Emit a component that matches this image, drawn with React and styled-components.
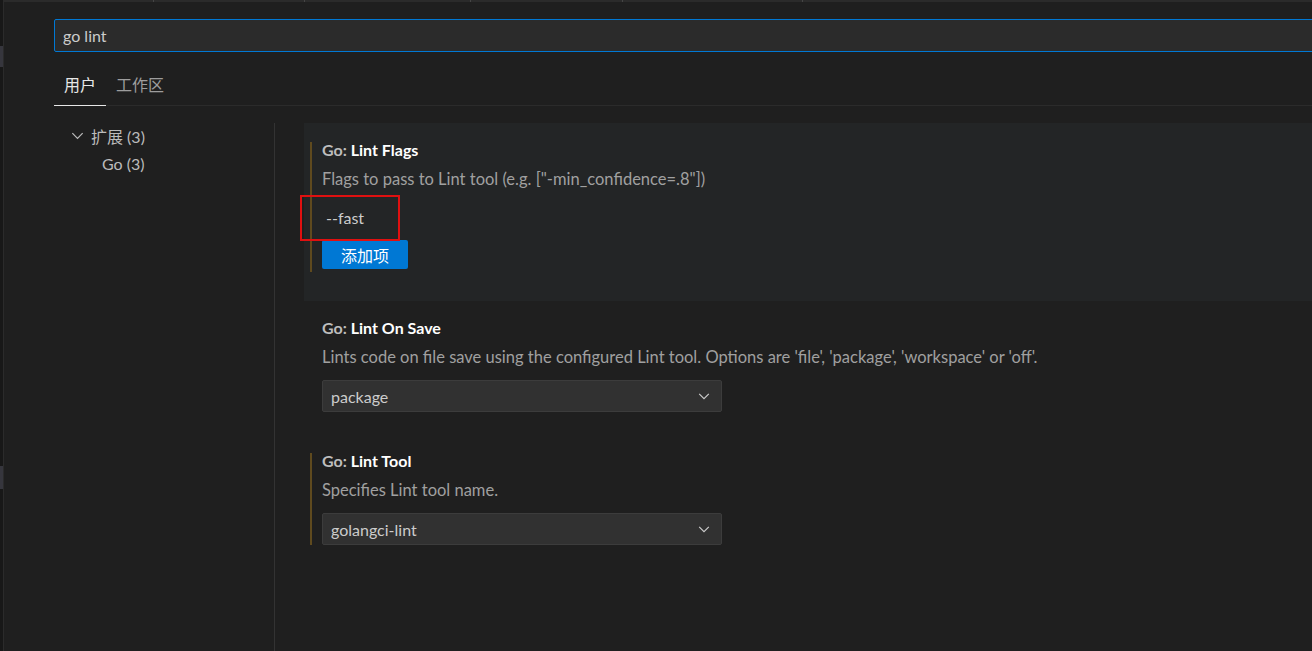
import React from 'react'
import styled, { createGlobalStyle } from 'styled-components'

const GlobalStyle = createGlobalStyle`
  html, body {
    margin: 0;
    padding: 0;
    background: #1f1f1f;
    overflow: hidden;
  }
  body {
    font-family: Lato, "Noto Sans CJK SC", sans-serif;
    color: #cccccc;
  }
`

const Page = styled.div`
  display: flex;
  width: 1312px;
  height: 651px;
  background: #1f1f1f;
  overflow: hidden;
`

const EdgeStrip = styled.div`
  width: 3px;
  flex-shrink: 0;
  background: #181818;
  border-right: 1px solid #2b2b2b;
  display: flex;
  flex-direction: column;
`

const EdgeMark = styled.div`
  height: ${p => p.$h}px;
  margin-top: ${p => p.$top}px;
  background: #36363d;
`

const Main = styled.div`
  flex: 1;
  min-width: 0;
  display: flex;
  flex-direction: column;
`

const TopStrip = styled.div`
  height: 2px;
  display: flex;
  background: #2b2b2b;
`

const TopSeg = styled.div`
  width: ${p => p.$w}px;
  flex-shrink: 0;
  border-right: 1px solid #454545;
`

const Editor = styled.div`
  flex: 1;
  display: flex;
  flex-direction: column;
  padding: 17px 0 0 50px;
`

const SearchBox = styled.div`
  height: 31px;
  margin-right: -30px;
  background: #2b2b2b;
  border: 1px solid #0078d4;
  border-radius: 2px;
  display: flex;
  align-items: center;
  padding-left: 8px;
  font-size: 16px;
  color: #cccccc;
`

const TabBar = styled.div`
  margin-top: 19px;
  display: flex;
  border-bottom: 1px solid #2b2b2b;
`

const Tab = styled.div`
  height: 34px;
  line-height: 28px;
  padding: 0 10px;
  margin-bottom: -1px;
  font-size: 16px;
  color: ${p => (p.$active ? '#e7e7e7' : '#9d9d9d')};
  border-bottom: 1px solid ${p => (p.$active ? '#e7e7e7' : 'transparent')};
`

const Body = styled.div`
  flex: 1;
  display: flex;
  margin-top: 17px;
`

const Toc = styled.div`
  width: 220px;
  flex-shrink: 0;
  border-right: 1px solid #333333;
`

const TocRow = styled.div`
  height: 28px;
  box-sizing: border-box;
  display: flex;
  align-items: center;
  gap: 6px;
  padding: 0 0 3px ${p => p.$indent}px;
  font-size: 16px;
  color: #bbbbbb;
`

const Settings = styled.div`
  flex: 1;
  padding-left: 29px;
  display: flex;
  flex-direction: column;
`

const Item = styled.div`
  position: relative;
  padding: 19px 0 ${p => p.$pb}px 6px;
  background: ${p => (p.$focused ? '#232526' : 'transparent')};
`

const Content = styled.div`
  border-left: 2px solid ${p => (p.$modified ? '#5f4a1e' : 'transparent')};
  padding: 0 0 ${p => p.$pb || 0}px 10px;
  display: flex;
  flex-direction: column;
  align-items: flex-start;
`

const Title = styled.div`
  height: 18px;
  line-height: 16px;
  padding-bottom: 2px;
  box-sizing: border-box;
  font-size: 16px;
  font-weight: 700;
  color: #bdbdbd;
  white-space: nowrap;
`

const TitleName = styled.span`
  color: #ffffff;
`

const Desc = styled.div`
  margin-top: 10px;
  height: 18px;
  line-height: 18px;
  font-size: 16.5px;
  color: #a0a0a0;
  white-space: nowrap;
`

const ListRow = styled.div`
  margin-top: 16px;
  height: 28px;
  line-height: 28px;
  padding-left: 4px;
  font-size: 16px;
  color: #cccccc;
`

const AddButton = styled.div`
  margin-top: 8px;
  width: 86px;
  height: 29px;
  display: flex;
  align-items: center;
  justify-content: center;
  background: #0078d4;
  border-radius: 2px;
  color: #ffffff;
  font-size: 16px;
`

const Select = styled.div`
  margin-top: 14px;
  width: 400px;
  height: 32px;
  box-sizing: border-box;
  background: #313131;
  border: 1px solid #3c3c3c;
  border-radius: 2px;
  display: flex;
  align-items: center;
  justify-content: space-between;
  padding: 0 10px 0 8px;
  font-size: 16px;
  color: #cccccc;
`

const Marker = styled.div`
  position: absolute;
  left: -4px;
  top: 72px;
  width: 100px;
  height: 46px;
  box-sizing: border-box;
  border: 2px solid #e01010;
  pointer-events: none;
`

const Chevron = ({ size = 14, color = '#cccccc' }) => (
  <svg width={size} height={size} viewBox="0 0 16 16" fill="none">
    <path d="M2.5 5.5 L8 11 L13.5 5.5" stroke={color} strokeWidth="1.3" />
  </svg>
)

const App = () => (
  <>
    <GlobalStyle />
    <Page>
      <EdgeStrip>
        <EdgeMark $top={46} $h={21} />
        <EdgeMark $top={399} $h={23} />
      </EdgeStrip>
      <Main>
        <TopStrip>
          <TopSeg $w={149} />
          <TopSeg $w={150} />
          <TopSeg $w={165} />
          <TopSeg $w={151} />
          <TopSeg $w={179} />
        </TopStrip>
        <Editor>
          <SearchBox>go lint</SearchBox>
          <TabBar>
            <Tab $active>用户</Tab>
            <Tab>工作区</Tab>
          </TabBar>
          <Body>
            <Toc>
              <TocRow $indent={16}>
                <Chevron size={15} color="#bbbbbb" />
                <span>扩展 (3)</span>
              </TocRow>
              <TocRow $indent={48}>Go (3)</TocRow>
            </Toc>
            <Settings>
              <Item $focused $pb={29}>
                <Content $modified $pb={3}>
                  <Title>Go: <TitleName>Lint Flags</TitleName></Title>
                  <Desc>Flags to pass to Lint tool (e.g. ["-min_confidence=.8"])</Desc>
                  <ListRow>--fast</ListRow>
                  <AddButton>添加项</AddButton>
                </Content>
                <Marker />
              </Item>
              <Item $pb={22}>
                <Content>
                  <Title>Go: <TitleName>Lint On Save</TitleName></Title>
                  <Desc>Lints code on file save using the configured Lint tool. Options are 'file', 'package', 'workspace' or 'off'.</Desc>
                  <Select>
                    <span>package</span>
                    <Chevron />
                  </Select>
                </Content>
              </Item>
              <Item $pb={22}>
                <Content $modified>
                  <Title>Go: <TitleName>Lint Tool</TitleName></Title>
                  <Desc>Specifies Lint tool name.</Desc>
                  <Select>
                    <span>golangci-lint</span>
                    <Chevron />
                  </Select>
                </Content>
              </Item>
            </Settings>
          </Body>
        </Editor>
      </Main>
    </Page>
  </>
)

export default App
